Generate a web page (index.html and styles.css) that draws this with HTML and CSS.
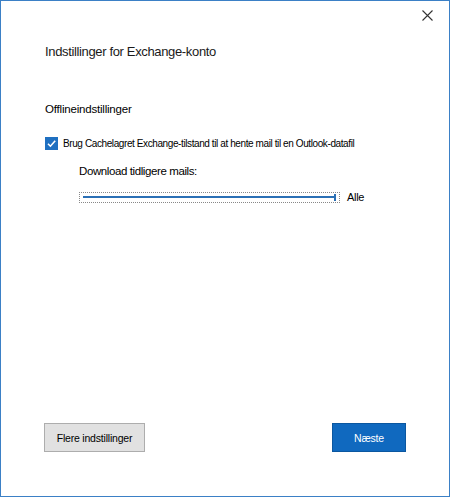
FILE: index.html
```html
<!DOCTYPE html>
<html>
<head>
<meta charset="utf-8">
<link rel="stylesheet" href="styles.css">
</head>
<body>
<div class="window">
  <div class="titlebar">
    <button class="close" aria-label="Luk">
      <svg width="11" height="11" viewBox="0 0 11 11"><path d="M0.5 0.5 L10.5 10.5 M10.5 0.5 L0.5 10.5" stroke="#333" stroke-width="1.1" fill="none"/></svg>
    </button>
  </div>
  <div class="content">
    <h1 class="title">Indstillinger for Exchange-konto</h1>
    <h2 class="section">Offlineindstillinger</h2>
    <label class="check-row">
      <span class="checkbox">
        <svg width="13" height="13" viewBox="0 0 13 13"><path d="M3 6.8 L5.4 9.2 L10.2 3.8" stroke="#fff" stroke-width="1.6" fill="none"/></svg>
      </span>
      <span class="check-label">Brug Cachelagret Exchange-tilstand til at hente mail til en Outlook-datafil</span>
    </label>
    <div class="sub">
      <div class="sub-label">Download tidligere mails:</div>
      <div class="slider-row">
        <div class="slider">
          <div class="track"></div>
          <div class="thumb"></div>
        </div>
        <span class="slider-value">Alle</span>
      </div>
    </div>
  </div>
  <div class="footer">
    <button class="btn btn-secondary">Flere indstillinger</button>
    <button class="btn btn-primary">Næste</button>
  </div>
</div>
</body>
</html>
```

FILE: styles.css
```css
* { box-sizing: border-box; }
html, body { margin: 0; padding: 0; background: #fff; }
body { font-family: "Liberation Sans", Arial, sans-serif; color: #000; }

.window {
  width: 450px;
  height: 497px;
  border: 1px solid #3b80c6;
  background: #fff;
  display: flex;
  flex-direction: column;
}

.titlebar {
  height: 28px;
  display: flex;
  justify-content: flex-end;
  align-items: flex-start;
  padding: 9px 16px 0 0;
}
.close {
  border: 0;
  background: transparent;
  padding: 0;
  width: 11px;
  height: 11px;
  display: flex;
}

.content {
  flex: 1;
  padding: 15px 0 0 44px;
  display: flex;
  flex-direction: column;
}

.title {
  margin: 0;
  font-size: 13px;
  font-weight: normal;
  line-height: 16px;
  letter-spacing: -0.35px;
  color: #1a1a1a;
}

.section {
  margin: 42px 0 0;
  font-size: 11.5px;
  font-weight: normal;
  line-height: 14px;
  letter-spacing: -0.2px;
}

.check-row {
  margin-top: 21px;
  display: flex;
  align-items: center;
  gap: 5px;
}
.checkbox {
  width: 13px;
  height: 13px;
  background: #1f70c1;
  display: flex;
}
.check-label {
  font-size: 10px;
  letter-spacing: -0.4px;
  line-height: 13px;
}

.sub {
  padding-left: 34px;
  margin-top: 14px;
}
.sub-label {
  font-size: 11.5px;
  line-height: 14px;
  letter-spacing: -0.4px;
}
.slider-row {
  margin-top: 13px;
  display: flex;
  align-items: center;
  gap: 7px;
}
.slider {
  position: relative;
  width: 261px;
  height: 11px;
  border: 1px dotted #888;
  display: flex;
  align-items: center;
  padding: 0 3px 0 3px;
}
.track {
  flex: 1;
  height: 2px;
  background: #2a6fb5;
}
.thumb {
  position: absolute;
  right: 3px;
  top: 1px;
  width: 2px;
  height: 7px;
  background: #2a6fb5;
}
.slider-value {
  font-size: 11px;
  letter-spacing: -0.3px;
}

.footer {
  display: flex;
  justify-content: space-between;
  padding: 0 43px 44px 43px;
}
.btn {
  height: 29px;
  font-family: "Liberation Sans", Arial, sans-serif;
  font-size: 10.5px;
  letter-spacing: -0.2px;
  padding: 0;
}
.btn-secondary {
  width: 101px;
  background: #e1e1e1;
  border: 1px solid #adadad;
  color: #000;
}
.btn-primary {
  width: 74px;
  background: #1069bf;
  border: 1px solid #0b57a0;
  color: #fff;
}
```
